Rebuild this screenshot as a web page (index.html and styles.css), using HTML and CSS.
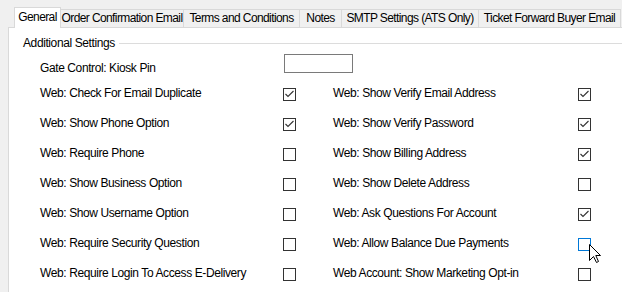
FILE: index.html
```html
<!DOCTYPE html>
<html>
<head>
<meta charset="utf-8">
<link rel="stylesheet" href="styles.css">
</head>
<body>
<div class="tabcontrol">
  <div class="tabstrip">
    <div class="tab selected w-general">General</div>
    <div class="tab w-order">Order Confirmation Email</div>
    <div class="tab w-terms">Terms and Conditions</div>
    <div class="tab w-notes">Notes</div>
    <div class="tab w-smtp">SMTP Settings (ATS Only)</div>
    <div class="tab w-ticket">Ticket Forward Buyer Email</div>
  </div>
  <div class="page">
    <div class="group">
      <div class="legend"><span class="legend-text">Additional Settings</span><span class="legend-line"></span></div>
      <div class="gate-row">
        <span class="label">Gate Control: Kiosk Pin</span>
        <span class="textbox"></span>
      </div>
      <div class="grid">
        <span class="label">Web: Check For Email Duplicate</span><span class="cb"><svg class="tick" width="11" height="11" viewBox="0 0 11 11"><path d="M1.5 5 L4 7.5 L9.5 2" fill="none" stroke="#333" stroke-width="1.1"/></svg></span>
        <span class="label">Web: Show Verify Email Address</span><span class="cb"><svg class="tick" width="11" height="11" viewBox="0 0 11 11"><path d="M1.5 5 L4 7.5 L9.5 2" fill="none" stroke="#333" stroke-width="1.1"/></svg></span>

        <span class="label">Web: Show Phone Option</span><span class="cb"><svg class="tick" width="11" height="11" viewBox="0 0 11 11"><path d="M1.5 5 L4 7.5 L9.5 2" fill="none" stroke="#333" stroke-width="1.1"/></svg></span>
        <span class="label">Web: Show Verify Password</span><span class="cb"><svg class="tick" width="11" height="11" viewBox="0 0 11 11"><path d="M1.5 5 L4 7.5 L9.5 2" fill="none" stroke="#333" stroke-width="1.1"/></svg></span>

        <span class="label">Web: Require Phone</span><span class="cb"></span>
        <span class="label">Web: Show Billing Address</span><span class="cb"><svg class="tick" width="11" height="11" viewBox="0 0 11 11"><path d="M1.5 5 L4 7.5 L9.5 2" fill="none" stroke="#333" stroke-width="1.1"/></svg></span>

        <span class="label">Web: Show Business Option</span><span class="cb"></span>
        <span class="label">Web: Show Delete Address</span><span class="cb"></span>

        <span class="label">Web: Show Username Option</span><span class="cb"></span>
        <span class="label">Web: Ask Questions For Account</span><span class="cb"><svg class="tick" width="11" height="11" viewBox="0 0 11 11"><path d="M1.5 5 L4 7.5 L9.5 2" fill="none" stroke="#333" stroke-width="1.1"/></svg></span>

        <span class="label">Web: Require Security Question</span><span class="cb"></span>
        <span class="label">Web: Allow Balance Due Payments</span><span class="cb hover">
          <svg class="cursor" width="13" height="20" viewBox="0 0 13 20"><path d="M0.5 0.5 L0.5 16.5 L4.5 12.5 L7.5 18.5 L9.5 17.5 L6.8 11.5 L11.5 11.5 Z" fill="#fff" stroke="#000" stroke-width="1" stroke-linejoin="miter"/></svg>
        </span>

        <span class="label">Web: Require Login To Access E-Delivery</span><span class="cb"></span>
        <span class="label">Web Account: Show Marketing Opt-in</span><span class="cb"></span>
      </div>
    </div>
  </div>
</div>
</body>
</html>
```

FILE: styles.css
```css
html, body {
  margin: 0;
  padding: 0;
}
body {
  width: 622px;
  height: 292px;
  overflow: hidden;
  background: #f0f0f0;
  font-family: "Liberation Sans", Arial, sans-serif;
  font-size: 12px;
  letter-spacing: -0.4px;
  color: #000;
}
.tabcontrol {
  margin-left: 8px;
  padding-top: 7px;
}
.tabstrip {
  display: flex;
  align-items: flex-end;
  padding-left: 6px;
  height: 20px;
  position: relative;
  z-index: 2;
}
.tab {
  box-sizing: border-box;
  height: 18px;
  border: 1px solid #d9d9d9;
  border-bottom: none;
  margin-left: -1px;
  background: #f0f0f0;
  text-align: center;
  line-height: 17px;
  white-space: nowrap;
  letter-spacing: -0.6px;
}
.tab.selected {
  height: 21px;
  margin-left: 0;
  margin-bottom: -1px;
  background: #fff;
  line-height: 19px;
  position: relative;
  z-index: 3;
}
.w-general { width: 47px; }
.w-order { width: 124px; }
.w-terms { width: 117px; }
.w-notes { width: 43px; }
.w-smtp { width: 138px; }
.w-ticket { width: 143px; }
.page {
  background: #fff;
  border-top: 1px solid #d9d9d9;
  border-left: 1px solid #d9d9d9;
  height: 264px;
  overflow: hidden;
}
.group {
  padding-top: 7px;
}
.legend {
  display: flex;
  align-items: center;
  height: 16px;
  padding-left: 14px;
}
.legend-text {
  padding-right: 4px;
}
.legend-line {
  flex: 1;
  height: 1px;
  background: #dcdcdc;
  margin-top: 1px;
}
.gate-row {
  display: flex;
  align-items: center;
  height: 25px;
  padding-left: 31px;
}
.gate-row .label {
  width: 244px;
  padding-top: 11px;
}
.textbox {
  box-sizing: border-box;
  width: 69px;
  height: 19px;
  border: 1px solid #7a7a7a;
  background: #fff;
}
.grid {
  display: grid;
  grid-template-columns: 243px 13px 37px 245px 13px;
  grid-auto-rows: 30px;
  align-items: center;
  padding-left: 31px;
  margin-top: 3px;
}
.grid .label:nth-child(4n+3) {
  grid-column: 4;
}
.label {
  white-space: nowrap;
  margin-top: -2px;
}
.cb {
  box-sizing: border-box;
  width: 13px;
  height: 13px;
  border: 1px solid #333;
  background: #fff;
  position: relative;
}
.tick {
  display: block;
}
.cb.hover {
  border-color: #0078d7;
}
.cursor {
  position: absolute;
  left: 10px;
  top: 5px;
}
```
